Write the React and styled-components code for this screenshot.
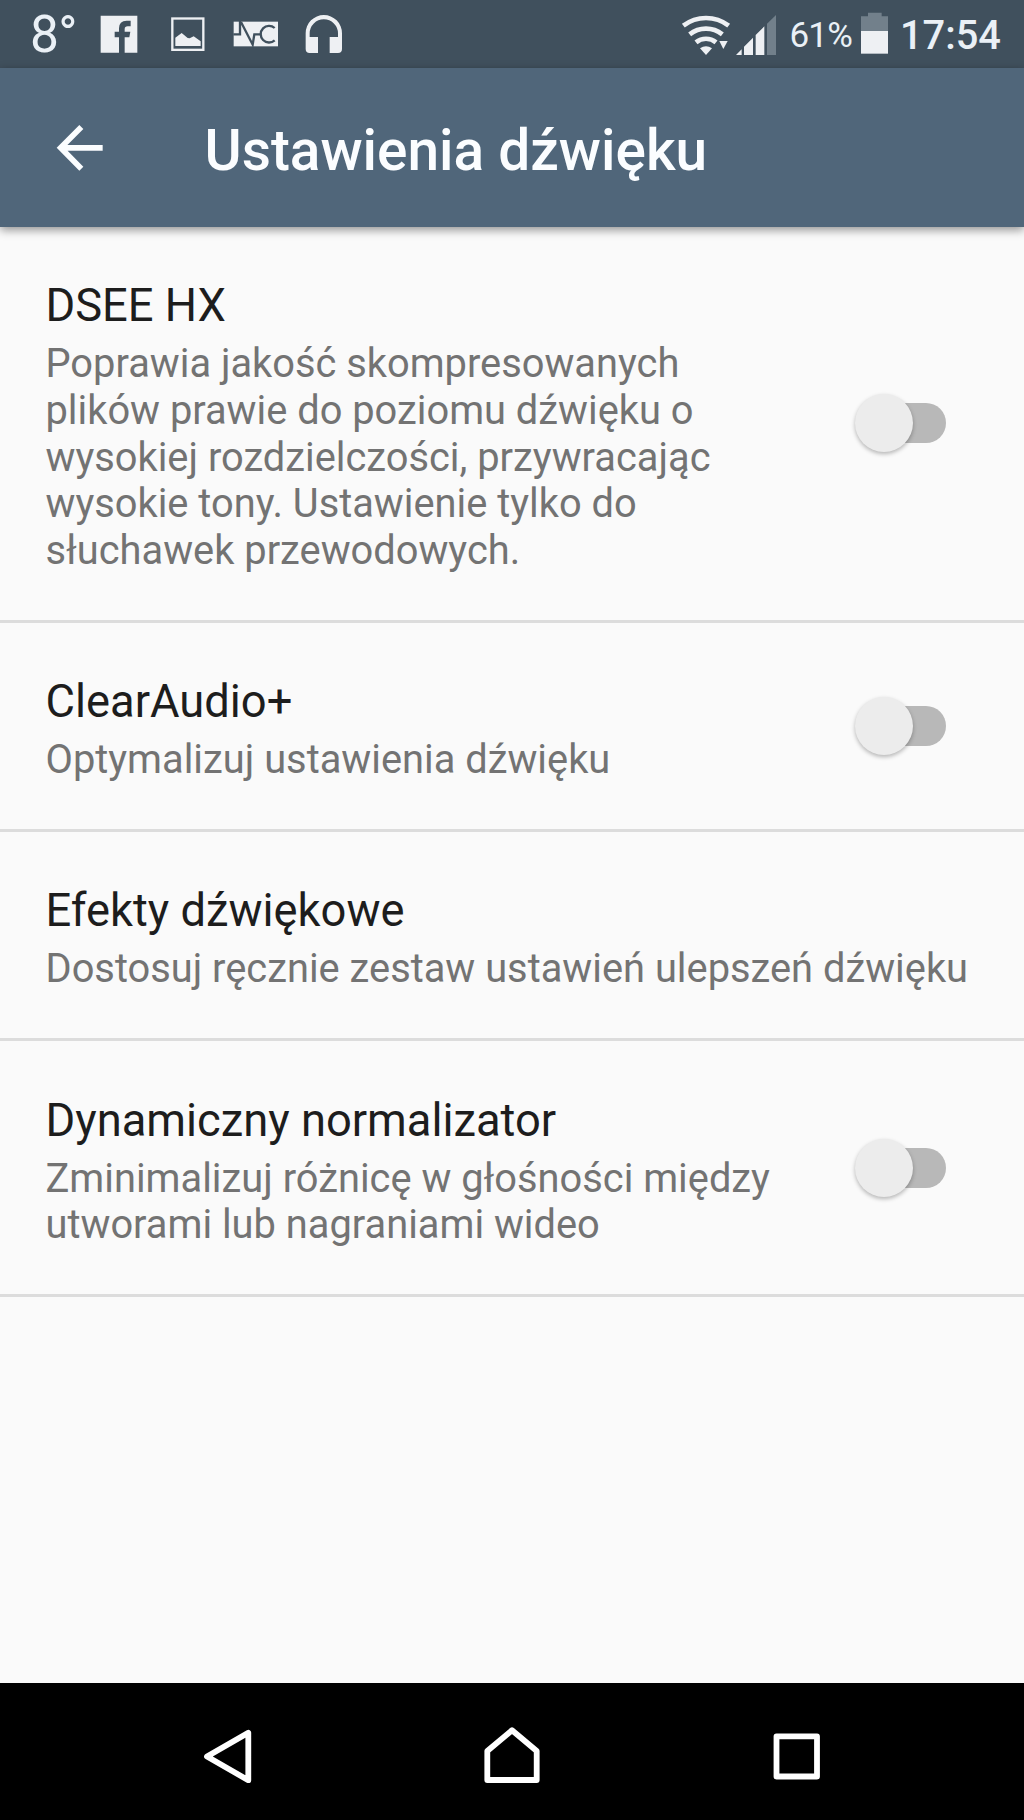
import React from "react";
import styled, { createGlobalStyle } from "styled-components";

const GlobalStyle = createGlobalStyle`
  *, *::before, *::after { box-sizing: border-box; }
  body { margin: 0; background: #fafafa; font-family: Roboto, "Noto Sans", sans-serif; }
  svg { display: block; flex: none; }
  h1, h2, p { margin: 0; font-weight: 400; }
`;

const Screen = styled.div`
  display: flex;
  flex-direction: column;
  width: 1024px;
  height: 1820px;
  background: #fafafa;
`;

const StatusBar = styled.div`
  display: flex;
  justify-content: space-between;
  height: 68px;
  padding: 0 23px 0 30px;
  background: #40505d;
  color: #eaf0f6;
`;

const StatusGroup = styled.div`
  display: flex;
  align-items: center;
`;

const StatusText = styled.span`
  display: block;
  width: ${(p) => p.$width}px;
  margin-left: ${(p) => p.$gap || 0}px;
  padding-top: ${(p) => p.$drop || 0}px;
  font-size: ${(p) => p.$size}px;
  font-weight: ${(p) => p.$weight || 400};
  letter-spacing: ${(p) => p.$tracking || 0}px;
  line-height: 60px;
  white-space: nowrap;
`;

const Glyph = styled.svg`
  width: ${(p) => p.$width}px;
  height: 68px;
  margin-left: ${(p) => p.$gap || 0}px;
`;

const AppBar = styled.header`
  position: relative;
  display: flex;
  align-items: center;
  height: 159px;
  flex: none;
  background: #50667a;
  color: #fbfdff;
  box-shadow: 0 3px 9px rgba(0, 0, 0, 0.42);
`;

const BackButton = styled.button`
  display: flex;
  width: 204.5px;
  height: 159px;
  padding: 0;
  border: 0;
  background: none;
`;

const AppTitle = styled.h1`
  padding-top: 5px;
  font-size: 56.8px;
  font-weight: 500;
  line-height: 67px;
  white-space: nowrap;
`;

const List = styled.main`
  flex: 1;
`;

const Row = styled.section`
  display: flex;
  align-items: center;
  justify-content: space-between;
  padding-right: ${(p) => (p.$wide ? 40 : 78)}px;
  border-bottom: 3px solid #dcdcdc;
`;

const RowText = styled.div`
  width: ${(p) => (p.$wide ? 938 : 740)}px;
  margin-left: 45.5px;
  padding: 52.3px 0 45.4px;
`;

const RowTitle = styled.h2`
  margin-bottom: 8.6px;
  color: #1d1d1d;
  font-size: 45.3px;
  line-height: 53.3px;
`;

const RowSummary = styled.p`
  color: #737373;
  font-size: 39.82px;
  line-height: 46.67px;
`;

const Track = styled.span`
  display: flex;
  align-items: center;
  width: 86px;
  height: 40px;
  border-radius: 20px;
  background: #b8b8b8;
`;

const Thumb = styled.span`
  flex: none;
  width: 58px;
  height: 58px;
  margin-left: -5px;
  border-radius: 50%;
  background: #ececec;
  box-shadow: 0 2px 4px rgba(0, 0, 0, 0.28);
`;

const NavBar = styled.nav`
  display: grid;
  grid-template-columns: repeat(3, 284.4px);
  justify-content: center;
  height: 137px;
  flex: none;
  background: #000;
`;

const NavButton = styled.button`
  display: flex;
  justify-content: center;
  padding: 0;
  border: 0;
  background: none;
`;

const SLOT = 68.33;
const WHITE = "#eef0f3";
const DIM = "#72808b";

function FacebookIcon() {
  return (
    <Glyph $width={SLOT} viewBox="256 0 205 204">
      <path fill={WHITE} d="M303 47H413V158H375V112H389L392 95H375V87Q375 79 384 79H393V62H381Q358 62 358 85V95H345V112H358V158H303Z" />
    </Glyph>
  );
}

function PhotoIcon() {
  return (
    <Glyph $width={SLOT} viewBox="461 0 205 204">
      <rect x="516" y="55.500" width="93" height="94" fill="none" stroke={WHITE} strokeWidth="7" />
      <path fill={WHITE} d="M525 138V113L544 99L562 114L568 115L580 109L601 124V138Z" />
    </Glyph>
  );
}

function NfcIcon() {
  return (
    <Glyph $width={SLOT} viewBox="666 0 205 204">
      <rect x="701" y="65" width="133" height="74" fill={WHITE} />
      <path fill="none" stroke="#40505d" strokeWidth="7" d="M700 103H720V63M723 66L758 134L763 103H780" />
      <path fill="none" stroke="#40505d" strokeWidth="7" d="M824 84A25 25 0 1 0 824 121" />
    </Glyph>
  );
}

function HeadphonesIcon() {
  return (
    <Glyph $width={SLOT} viewBox="871 0 205 204">
      <path fill={WHITE} d="M918 147V100A54.500 55 0 0 1 1027 100V147A12 12 0 0 1 1015 159H990V111H1015V100A42.500 42 0 0 0 930 100V111H955V159H930A12 12 0 0 1 918 147Z" />
    </Glyph>
  );
}

function WifiIcon() {
  return (
    <Glyph $width={50} viewBox="63 0 150 204">
      <g fill="none" stroke={WHITE} strokeWidth="14">
        <path d="M70 77A112 112 0 0 1 206 77" />
        <path d="M89 103A78 78 0 0 1 187 103" />
        <path d="M108 127A47 47 0 0 1 168 127" />
      </g>
      <path fill={WHITE} d="M120 145Q138 132 156 145L138 165Z" />
      <path fill={WHITE} d="M178 123H203L190 147Z" />
    </Glyph>
  );
}

function SignalIcon() {
  return (
    <Glyph $width={41} $gap={5} viewBox="228 0 123 204">
      <path fill={WHITE} d="M228 165L245 148V165ZM252 165V140L279 113V165ZM287 165V105L313 79V165Z" />
      <path fill={DIM} d="M321 165V71L348 45V165Z" />
    </Glyph>
  );
}

function BatteryIcon() {
  return (
    <Glyph $width={28} $gap={8} viewBox="603 0 84 204">
      <path fill={DIM} d="M624 38H665V49H684V94H603V49H624Z" />
      <path fill={WHITE} d="M603 93H684V161H603Z" />
    </Glyph>
  );
}

function BackArrow() {
  return (
    <svg width="204" height="159" viewBox="0 24 612 477" fill="none" stroke="#fbfdff" strokeWidth="17">
      <path d="M244 201L182 263.500L244 326M185 263.500H308" />
    </svg>
  );
}

function NavIcon({ d }) {
  return (
    <svg width="80" height="137" viewBox="0 0 80 137" fill="none" stroke="#fff" strokeWidth="5.800" strokeLinejoin="round">
      <path d={d} />
    </svg>
  );
}

const NAV = [
  { label: "Wstecz", d: "M19 73.500L60.300 49.800V97.200Z" },
  { label: "Ekran główny", d: "M15.300 68L40 47.300L64.700 68V97H15.300Z" },
  { label: "Ostatnie", d: "M20.500 53.300H61V93.500H20.500Z" },
];

const SETTINGS = [
  {
    title: "DSEE HX",
    summary:
      "Poprawia jakość skompresowanych plików prawie do poziomu dźwięku o wysokiej rozdzielczości, przywracając wysokie tony. Ustawienie tylko do słuchawek przewodowych.",
    toggle: true,
  },
  { title: "ClearAudio+", summary: "Optymalizuj ustawienia dźwięku", toggle: true },
  { title: "Efekty dźwiękowe", summary: "Dostosuj ręcznie zestaw ustawień ulepszeń dźwięku", toggle: false },
  {
    title: "Dynamiczny normalizator",
    summary: "Zminimalizuj różnicę w głośności między utworami lub nagraniami wideo",
    toggle: true,
  },
];

export default function App() {
  return (
    <>
      <GlobalStyle />
      <Screen>
        <StatusBar>
          <StatusGroup>
            <StatusText $size={51.5} $width={55.3} $drop={2} $tracking={-0.8}>8°</StatusText>
            <FacebookIcon />
            <PhotoIcon />
            <NfcIcon />
            <HeadphonesIcon />
          </StatusGroup>
          <StatusGroup>
            <WifiIcon />
            <SignalIcon />
            <StatusText $size={35} $width={63.5} $gap={12.5} $drop={3} $tracking={-0.8}>61%</StatusText>
            <BatteryIcon />
            <StatusText $size={39.8} $weight={500} $width={101} $gap={11} $drop={3}>17:54</StatusText>
          </StatusGroup>
        </StatusBar>
        <AppBar>
          <BackButton aria-label="Wstecz">
            <BackArrow />
          </BackButton>
          <AppTitle>Ustawienia dźwięku</AppTitle>
        </AppBar>
        <List>
          {SETTINGS.map((s) => (
            <Row key={s.title} $wide={!s.toggle}>
              <RowText $wide={!s.toggle}>
                <RowTitle>{s.title}</RowTitle>
                <RowSummary>{s.summary}</RowSummary>
              </RowText>
              {s.toggle && (
                <Track role="switch" aria-checked="false">
                  <Thumb />
                </Track>
              )}
            </Row>
          ))}
        </List>
        <NavBar>
          {NAV.map((n) => (
            <NavButton key={n.label} aria-label={n.label}>
              <NavIcon d={n.d} />
            </NavButton>
          ))}
        </NavBar>
      </Screen>
    </>
  );
}
